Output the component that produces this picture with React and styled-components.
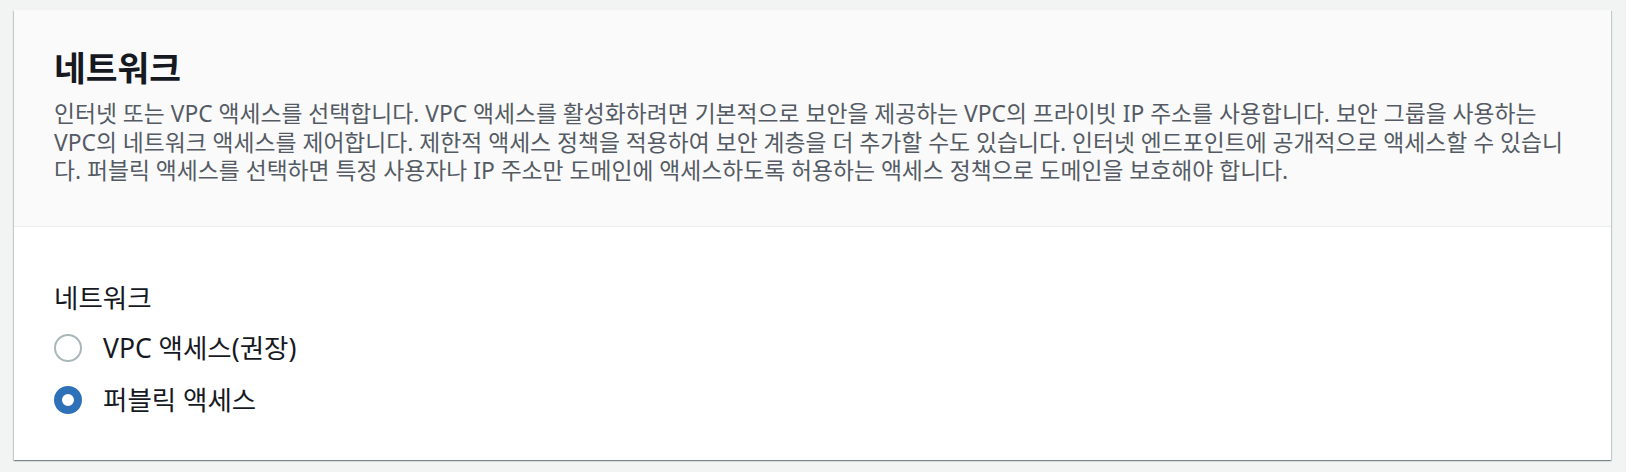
import React, { useState } from 'react'
import styled, { createGlobalStyle } from 'styled-components'

const GlobalStyle = createGlobalStyle`
    html, body {
        margin: 0;
        padding: 0;
        background: #f2f3f3;
    }
    body {
        font-family: "Noto Sans", "Noto Sans CJK KR", sans-serif;
        -webkit-font-smoothing: antialiased;
    }
`

const options = [
    { value: 'vpc', label: 'VPC 액세스(권장)' },
    { value: 'public', label: '퍼블릭 액세스' },
]

const App = () => {
    const [access, setAccess] = useState('public')

    return <Page>
        <GlobalStyle />
        <Card>
            <Header>
                <Title>네트워크</Title>
                <Description>
                    인터넷 또는 VPC 액세스를 선택합니다. VPC 액세스를 활성화하려면 기본적으로 보안을 제공하는 VPC의 프라이빗 IP 주소를 사용합니다.
                    보안 그룹을 사용하는 VPC의 네트워크 액세스를 제어합니다. 제한적 액세스 정책을 적용하여 보안 계층을 더 추가할 수도 있습니다.
                    인터넷 엔드포인트에 공개적으로 액세스할 수 있습니다. 퍼블릭 액세스를 선택하면 특정 사용자나 IP 주소만 도메인에 액세스하도록
                    허용하는 액세스 정책으로 도메인을 보호해야 합니다.
                </Description>
            </Header>
            <Body>
                <FieldLabel>네트워크</FieldLabel>
                <RadioGroup>
                    {options.map(opt => (
                        <RadioRow key={opt.value} onClick={() => setAccess(opt.value)}>
                            <RadioCircle $checked={access === opt.value} />
                            <RadioText>{opt.label}</RadioText>
                        </RadioRow>
                    ))}
                </RadioGroup>
            </Body>
        </Card>
    </Page>
}

const Page = styled.main`
    padding: 10px 15px 14px 14px;
`

const Card = styled.section`
    background: #ffffff;
    box-shadow: 0 1px 1px 0 rgba(0, 28, 36, 0.3),
        1px 1px 1px 0 rgba(0, 28, 36, 0.15),
        -1px 1px 1px 0 rgba(0, 28, 36, 0.15);
`

const Header = styled.header`
    background: #fafafa;
    border-bottom: 1px solid #eaeded;
    padding: 40px 40px 40px 40px;
`

const Title = styled.h2`
    margin: 0 0 14px;
    font-size: 34.5px;
    line-height: 36px;
    font-weight: 700;
    color: #16191f;
`

const Description = styled.p`
    margin: 0;
    font-size: 22.8px;
    line-height: 28.5px;
    color: #545b64;
`

const Body = styled.div`
    padding: 56px 40px 40px 40px;
`

const FieldLabel = styled.div`
    font-size: 26.5px;
    line-height: 30px;
    color: #16191f;
    margin-bottom: 15px;
`

const RadioGroup = styled.div`
    display: flex;
    flex-direction: column;
    gap: 12px;
`

const RadioRow = styled.label`
    display: flex;
    align-items: center;
    gap: 21px;
    height: 40px;
    cursor: pointer;
`

const RadioCircle = styled.span`
    box-sizing: border-box;
    width: 28px;
    height: 28px;
    border-radius: 50%;
    flex-shrink: 0;
    background: #ffffff;
    border: ${p => p.$checked ? '8px solid #2f71b8' : '2px solid #aab7b8'};
`

const RadioText = styled.span`
    font-size: 26.5px;
    line-height: 30px;
    color: #16191f;
`

export default App
